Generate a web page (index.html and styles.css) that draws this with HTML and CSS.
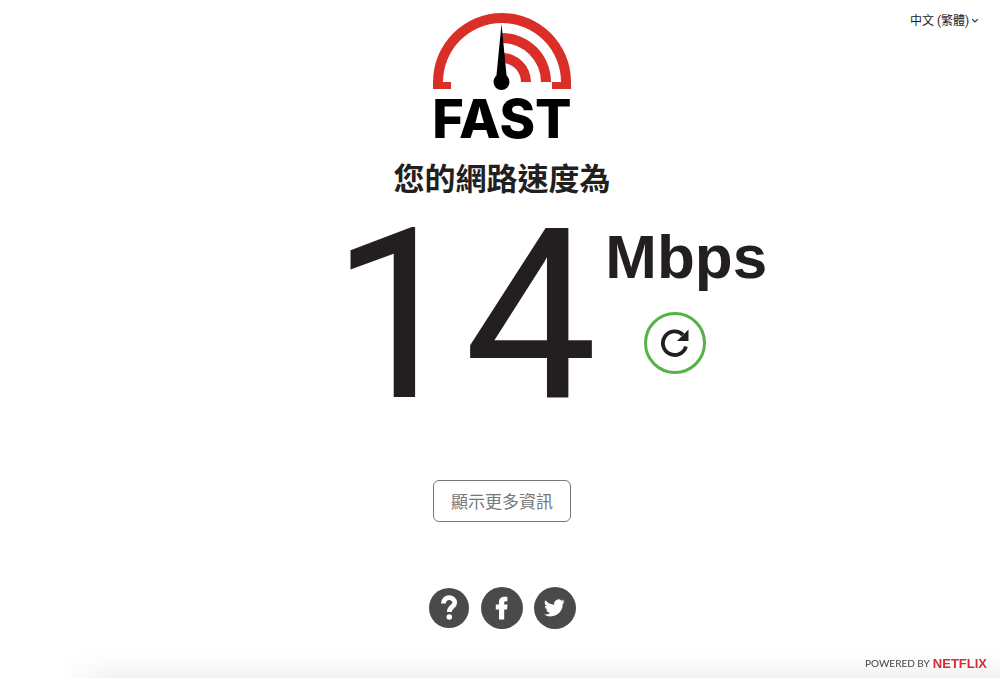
FILE: index.html
```html
<!DOCTYPE html>
<html lang="zh-Hant">
<head>
  <meta charset="UTF-8">
  <meta name="viewport" content="width=device-width, initial-scale=1">
  <title>FAST</title>
  <link rel="stylesheet" href="styles.css">
</head>
<body>
  <div class="language">
    <select class="language-select" aria-label="語言">
      <option>中文 (繁體)</option>
    </select>
    <svg class="language-arrow" viewBox="0 0 8 6" aria-hidden="true">
      <path d="M1.2 1.2 L4 4 L6.8 1.2" fill="none" stroke="#333" stroke-width="1.2"/>
    </svg>
  </div>

  <main class="main">
    <div class="logo">
      <svg class="gauge" viewBox="0 0 140 78" aria-hidden="true">
        <g fill="#d92f27">
          <path d="M1 77 V70 A69 69 0 0 1 139 70 V77 H120 V70 H129 A59 59 0 0 0 11 70 H19 V77 Z"/>
          <path d="M70 21 A49 49 0 0 1 119 70 H109 A39 39 0 0 0 70 31 Z"/>
          <path d="M70 41 A29 29 0 0 1 99 70 H89 A19 19 0 0 0 70 51 Z"/>
        </g>
        <path d="M69.5 12 L75 68 H64 Z" fill="#000"/>
        <circle cx="69.5" cy="70" r="8" fill="#000"/>
      </svg>
      <div class="logo-text">FAST</div>
    </div>

    <h1 class="title">您的網路速度為</h1>

    <div class="speed">
      <div class="speed-value">14</div>
      <div class="speed-side">
        <div class="speed-unit">Mbps</div>
        <button class="reload" type="button" aria-label="重新測試">
          <svg viewBox="0 0 30 30" aria-hidden="true">
            <path d="M26 18.5 A11.8 11.8 0 1 1 23 6.8" fill="none" stroke="#231f20" stroke-width="3.8"/>
            <path d="M28.5 1.5 V13 H17 Z" fill="#231f20"/>
          </svg>
        </button>
      </div>
    </div>

    <button class="more" type="button">顯示更多資訊</button>

    <nav class="links">
      <a class="link" href="#" aria-label="說明">
        <svg viewBox="0 0 42 42" aria-hidden="true">
          <circle cx="21" cy="21" r="20" fill="#4a4a4a"/>
          <path d="M15.5 16.5 C15.5 8.5 27 9.3 26.7 15.8 C26.5 19.8 21.3 19.8 21.3 25" fill="none" stroke="#fff" stroke-width="4.8"/>
          <circle cx="21.3" cy="30" r="2.8" fill="#fff"/>
        </svg>
      </a>
      <a class="link" href="#" aria-label="Facebook">
        <svg viewBox="0 0 42 42" aria-hidden="true">
          <circle cx="21" cy="21" r="21" fill="#4a4a4a"/>
          <path d="M18 32.5 V22.4 H14.8 V17.4 H18 V15 C18 11.3 20.5 9.8 23.8 9.8 H26.4 V14.3 H24.8 C23.5 14.3 23.2 14.8 23.2 16 V17.4 H26.5 L26 22.4 H23.2 V32.5 Z" fill="#fff"/>
        </svg>
      </a>
      <a class="link" href="#" aria-label="Twitter">
        <svg viewBox="0 0 42 42" aria-hidden="true">
          <circle cx="21" cy="21" r="21" fill="#4a4a4a"/>
          <path transform="translate(10 10.5) scale(0.87)" d="M23.95 4.57a10 10 0 0 1-2.82.77 4.96 4.96 0 0 0 2.16-2.72c-.95.55-2 .95-3.13 1.18a4.92 4.92 0 0 0-8.38 4.48C7.69 8.1 4.07 6.13 1.64 3.16a4.92 4.92 0 0 0 1.52 6.57 4.9 4.9 0 0 1-2.23-.61v.06a4.92 4.92 0 0 0 3.95 4.83 5 5 0 0 1-2.21.08 4.94 4.94 0 0 0 4.6 3.42A9.87 9.87 0 0 1 0 19.54a14 14 0 0 0 7.55 2.21c9.05 0 14-7.5 14-13.98 0-.21 0-.42-.02-.63a9.94 9.94 0 0 0 2.46-2.55z" fill="#fff"/>
        </svg>
      </a>
    </nav>
  </main>

  <footer class="footer">
    <span class="powered">POWERED BY</span>
    <a class="netflix" href="#">NETFLIX</a>
  </footer>
</body>
</html>
```
FILE: styles.css
```css
* {
  box-sizing: border-box;
}
body {
  display: flex;
  flex-direction: column;
  min-height: 100vh;
  margin: 0;
  background: #fff;
  color: #231f20;
  font-family: "Liberation Sans", "Noto Sans CJK TC", sans-serif;
}
.language {
  position: absolute;
  top: 11px;
  right: 21px;
  display: flex;
  align-items: center;
}
.language-select {
  appearance: none;
  padding: 0 9px 0 0;
  border: none;
  background: transparent;
  color: #222;
  font-family: Roboto, "Noto Sans CJK TC", sans-serif;
  font-size: 12px;
  line-height: 20px;
}
.language-arrow {
  width: 8px;
  height: 6px;
  margin-left: -8px;
  pointer-events: none;
}
.main {
  flex: 1;
  display: flex;
  flex-direction: column;
  align-items: center;
  padding: 12px 0 0 4px;
}
.logo {
  display: flex;
  flex-direction: column;
  align-items: center;
}
.gauge {
  display: block;
  width: 140px;
  height: 78px;
}
.logo-text {
  color: #000;
  font-family: Inter, sans-serif;
  font-size: 54px;
  font-weight: 800;
  line-height: 58px;
}
.title {
  margin: 9px 0 0;
  font-family: "Noto Sans CJK TC", sans-serif;
  font-size: 31px;
  font-weight: 700;
  line-height: 40px;
}
.speed {
  display: flex;
  padding-left: 94px;
}
.speed-value {
  font-family: Roboto, sans-serif;
  font-size: 237px;
  line-height: 238px;
}
.speed-side {
  display: flex;
  flex-direction: column;
  align-items: center;
  padding: 23px 0 0 8px;
}
.speed-unit {
  font-size: 62px;
  font-weight: bold;
  line-height: 74px;
}
.reload {
  display: flex;
  align-items: center;
  justify-content: center;
  width: 62px;
  height: 62px;
  margin: 18px 22px 0 0;
  padding: 0;
  border: 3px solid #54b345;
  border-radius: 50%;
  background: #fff;
  cursor: pointer;
}
.reload svg {
  width: 30px;
  height: 30px;
}
.more {
  margin-top: 45px;
  padding: 0 17px;
  border: 1px solid #777;
  border-radius: 6px;
  background: #fff;
  color: #777;
  font-family: "Noto Sans CJK TC", sans-serif;
  font-size: 17px;
  line-height: 40px;
  cursor: pointer;
}
.links {
  display: flex;
  gap: 11px;
  margin-top: 65px;
}
.link,
.link svg {
  display: block;
  width: 42px;
  height: 42px;
}
.footer {
  display: flex;
  align-items: center;
  justify-content: flex-end;
  gap: 3px;
  height: 30px;
  padding: 0 13px 0 0;
  background: linear-gradient(to bottom, #fff, #fcfcfc 40%, #f3f3f3);
  mask-image: linear-gradient(to right, transparent 60px, #000 110px);
}
.powered {
  color: #444;
  font-family: Lato, sans-serif;
  font-size: 10px;
}
.netflix {
  color: #d22f35;
  font-family: "Liberation Sans Narrow", "Liberation Sans", sans-serif;
  font-size: 13px;
  font-weight: bold;
  text-decoration: none;
}
```
